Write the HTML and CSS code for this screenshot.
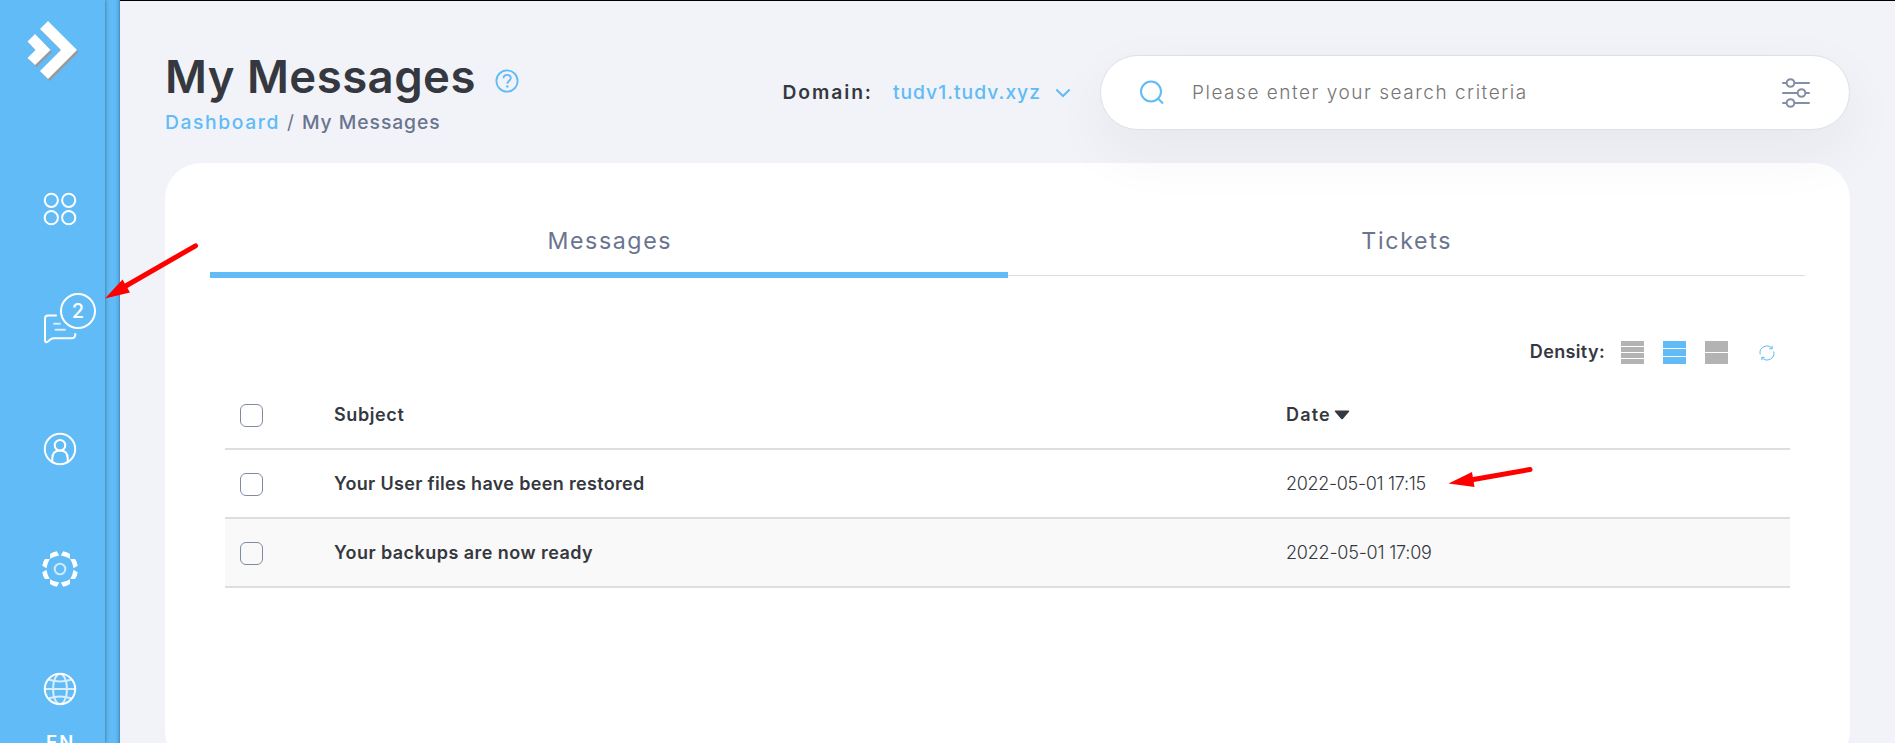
FILE: index.html
```html
<!DOCTYPE html>
<html lang="en">
<head>
<meta charset="utf-8">
<title>My Messages</title>
<link rel="stylesheet" href="styles.css">
</head>
<body>
<div class="app">
  <aside class="sidebar">
    <nav class="sidebar-inner">
      <svg class="logo" width="54" height="62" viewBox="0 0 54 62">
        <g fill="#999" transform="translate(1.500 2)"><path d="M21 0L50 29 21 58 13 50 34 29 13 8Z"/><path d="M8 13L23.500 29 8 44 0.500 37 8.500 29 0.500 20.500Z"/></g>
        <g fill="#fff"><path d="M21 0L50 29 21 58 13 50 34 29 13 8Z"/><path d="M8 13L23.500 29 8 44 0.500 37 8.500 29 0.500 20.500Z"/></g>
      </svg>
      <a class="nav-item">
        <svg width="36" height="36" viewBox="0 0 36 36" fill="none" stroke="#fff" stroke-width="2"><circle cx="9.300" cy="9.300" r="6.600"/><circle cx="26.700" cy="9.300" r="6.600"/><circle cx="9.300" cy="26.700" r="6.600"/><circle cx="26.700" cy="26.700" r="6.600"/></svg>
      </a>
      <a class="nav-item">
        <svg width="36" height="36" viewBox="0 0 36 36" fill="none" stroke="#fff" stroke-width="2" stroke-linecap="round"><path d="M14 4.500H6Q3 4.500 3 7.500V29C3 31.500 4.500 32 6 30.500L9 28Q10 27.200 12 27.200H30Q33.300 27.200 33.300 23"/><path d="M12 12.800H18M13.500 18.800H23" opacity=".75"/></svg>
        <span class="badge">2</span>
      </a>
      <a class="nav-item">
        <svg width="36" height="36" viewBox="0 0 36 36" fill="none" stroke="#fff" stroke-width="2"><circle cx="18" cy="18" r="15.200"/><circle cx="18" cy="14.200" r="5.300"/><path d="M10.300 31V27.500C10.300 22 13.500 19.500 18 19.500S25.700 22 25.700 27.500V31"/></svg>
      </a>
      <a class="nav-item">
        <svg width="36" height="36" viewBox="0 0 36 36" fill="#fff">
          <defs><g id="petals"><path d="M.8-13.500L3.200-17.700Q7-17.300 10-15V-10.200Q6-12.800 .8-13.500Z"/><path d="M-.8-13.500L-3.200-17.700Q-7-17.300-10-15V-10.200Q-6-12.800-.8-13.500Z"/></g></defs>
          <circle cx="18" cy="18" r="5.300" fill="none" stroke="#fff" stroke-width="2" opacity=".7"/>
          <use href="#petals" transform="translate(18 18)"/><use href="#petals" transform="translate(18 18) rotate(90)"/><use href="#petals" transform="translate(18 18) rotate(180)"/><use href="#petals" transform="translate(18 18) rotate(270)"/>
        </svg>
      </a>
      <a class="nav-item">
        <svg width="36" height="36" viewBox="0 0 36 36" fill="none" stroke="#fff" stroke-width="2"><circle cx="18" cy="18" r="15.200"/><g opacity=".75"><ellipse cx="18" cy="18" rx="7" ry="15"/><path d="M3 18H33M6.500 8.500Q18 12.500 29.500 8.500M6.500 27.500Q18 23.500 29.500 27.500"/></g></svg>
        <span class="lang">EN</span>
      </a>
    </nav>
  </aside>

  <main class="main">
    <header class="header">
      <div class="heading">
        <div class="title-row">
          <h1 class="title">My Messages</h1>
          <svg class="help" width="24" height="24" viewBox="0 0 24 24" fill="none" stroke="#60bbf6" stroke-width="1.800"><circle cx="12" cy="12" r="10.600"/><path d="M8.500 9.300C8.500 4.700 15.800 4.900 15.800 9.100 15.800 11.700 12.300 11.800 12.300 14.800"/><path d="M12.300 16.500V18.500" stroke-width="2.400"/></svg>
        </div>
        <div class="crumbs"><a class="crumb-link">Dashboard</a><span class="slash">/</span><span class="crumb-current">My Messages</span></div>
      </div>
      <div class="tools">
        <span class="domain-label">Domain:</span>
        <span class="domain-value">tudv1.tudv.xyz</span>
        <svg class="chevron" width="16" height="10" viewBox="0 0 16 10" fill="none" stroke="#60bbf6" stroke-width="2"><path d="M1.300 1.500L8 8 14.700 1.500"/></svg>
        <div class="search">
          <svg class="search-icon" width="26" height="26" viewBox="0 0 26 26" fill="none" stroke="#60bbf6" stroke-width="2"><circle cx="12" cy="11.500" r="10"/><path d="M18.800 18.300L24 23.500"/></svg>
          <span class="placeholder">Please enter your search criteria</span>
          <svg width="28" height="30" viewBox="0 0 28 30" fill="#fff" stroke="#858ea8" stroke-width="2" stroke-linecap="round"><path d="M1 5H27M1 15H27M1 25H27"/><circle cx="8.500" cy="5" r="3.800"/><circle cx="19.500" cy="15" r="3.800"/><circle cx="8.500" cy="25" r="3.800"/></svg>
        </div>
      </div>
    </header>

    <section class="card">
      <div class="tabs">
        <a class="tab active"><span class="tab-messages">Messages</span></a>
        <a class="tab"><span class="tab-tickets">Tickets</span></a>
      </div>
      <div class="content">
        <div class="toolbar">
          <span class="density-label">Density:</span>
          <span class="density"><i></i><i></i><i></i><i></i></span>
          <span class="density selected"><i></i><i></i><i></i></span>
          <span class="density"><i></i><i></i></span>
          <svg class="refresh" width="16" height="16" viewBox="0 0 16 16" fill="none" stroke="#60bbf6" stroke-width="1"><path d="M1.200 9.500A6.800 6.800 0 0 1 13 3.500M13.200 0.800V3.700H10.300M14.800 6.500A6.800 6.800 0 0 1 3 12.500M2.800 15.200V12.300H5.700"/></svg>
        </div>
        <div class="row head">
          <span class="check"></span><span class="subject col-title">Subject</span>
          <span class="date-head">Date</span><svg class="sort" width="16" height="10" viewBox="0 0 16 10" fill="#35383f"><path d="M1.500 0.500H14.500Q16 0.700 15 1.800L9 8.700Q8 9.700 7 8.700L1 1.800Q0 0.700 1.500 0.500Z"/></svg>
        </div>
        <div class="row">
          <span class="check"></span><span class="subject">Your User files have been restored</span><span class="date">2022-05-01 17:15</span>
        </div>
        <div class="row striped">
          <span class="check"></span><span class="subject wide">Your backups are now ready</span><span class="date">2022-05-01 17:09</span>
        </div>
      </div>
    </section>
  </main>
</div>
<svg class="annotations" width="1895" height="743" viewBox="0 0 1895 743" fill="#f00">
  <path d="M195.500 245.800L124 287" stroke="#f00" stroke-width="5" stroke-linecap="round"/>
  <path d="M105 298.500L122.500 279.500 130 292.500Z"/>
  <path d="M1530 469.500L1472 479.700" stroke="#f00" stroke-width="5" stroke-linecap="round"/>
  <path d="M1448.500 483.500L1472 472 1474.500 487Z"/>
</svg>
</body>
</html>
```

FILE: styles.css
```css
* { box-sizing: border-box; }
body {
  margin: 0;
  font-family: Inter, "Liberation Sans", sans-serif;
  color: #35383f;
}
svg { display: block; flex: none; }
.app { display: flex; width: 1895px; height: 743px; overflow: hidden; }

.sidebar {
  flex: none;
  width: 120px;
  background: linear-gradient(to left, rgba(0, 30, 70, .3), rgba(0, 30, 70, .08) 2px, transparent 5px) #60bbf6;
}
.sidebar-inner {
  width: 105px;
  height: 743px;
  padding-top: 21px;
  background: #60bbf6;
  box-shadow: 0 0 4px rgba(0, 0, 0, .45);
}
.logo { margin-left: 27px; }
.nav-item {
  display: block;
  position: relative;
  height: 36px;
  margin: 0 0 84px 42px;
}
.logo + .nav-item { margin-top: 108px; }
.badge {
  position: absolute;
  left: 18px;
  top: -18px;
  width: 36px;
  height: 36px;
  border: 2.5px solid #fff;
  border-radius: 50%;
  background: #60bbf6;
  box-shadow: 0 0 0 3px #60bbf6;
  color: #fff;
  font-size: 20px;
  font-weight: 500;
  line-height: 32px;
  text-align: center;
}
.lang {
  display: block;
  margin: 23px 0 0 4px;
  font-size: 18.500px;
  line-height: 24px;
  font-weight: 600;
  letter-spacing: 2px;
  color: #fff;
}

.main {
  width: 1775px;
  height: 790px;
  padding: 0 45px;
  background: #f1f3f8;
  border-top: 1px solid #000;
}
.header { display: flex; justify-content: space-between; height: 162px; padding-top: 48px; }
.title-row { display: flex; align-items: center; }
.title { margin: 0; font-size: 45.500px; line-height: 56px; font-weight: 600; letter-spacing: .45px; }
.help { margin: 7px 0 0 19px; }
.crumbs { display: flex; margin: 3px 0 0; font-size: 19.300px; line-height: 28px; font-weight: 500; color: #6b748e; }
.crumb-link { color: #60bbf6; letter-spacing: 1.600px; }
.slash { margin: 0 8px 0 7px; font-weight: 400; }
.crumb-current { letter-spacing: .95px; }
.tools { display: flex; align-items: center; height: 75px; margin-top: 6px; font-size: 19.300px; line-height: 28px; }
.domain-label { font-weight: 600; letter-spacing: 1.900px; margin: -1px 20px 0 0; }
.domain-value { font-weight: 500; letter-spacing: 1px; color: #60bbf6; margin: -1px 14px 0 0; }
.chevron { margin-right: 29px; }
.search {
  display: flex;
  align-items: center;
  width: 750px;
  height: 75px;
  padding: 0 39px 0 38px;
  background: #fff;
  border: 1px solid #dbe0ea;
  border-radius: 38px;
  box-shadow: 0 22px 60px rgba(28, 45, 70, .055);
  position: relative;
  z-index: 1;
}
.search-icon { margin-right: 27px; }
.placeholder { flex: 1; margin-top: 1px; font-size: 19px; font-weight: 300; letter-spacing: 1.520px; color: #757575; }

.card { height: 604px; padding: 63px 45px 0; background: #fff; border-radius: 36px; }
.tabs { display: flex; align-items: flex-start; }
.tab {
  flex: 1;
  height: 50px;
  border-bottom: 1px solid #dedede;
  font-size: 23.200px;
  line-height: 31px;
  font-weight: 400;
  text-align: center;
  color: #6b748e;
}
.tab.active { height: 52px; border-bottom: 6px solid #60bbf6; }
.tab-messages { letter-spacing: 1.600px; margin-left: 2px; }
.tab-tickets { letter-spacing: 1.700px; margin-left: 1px; }

.content { padding: 61px 15px 0; }
.toolbar { display: flex; align-items: center; height: 27px; padding-right: 15px; margin-bottom: 15px; }
.density-label { margin: -3px 16px 0 auto; font-size: 18px; font-weight: 600; letter-spacing: .35px; }
.density { display: flex; flex-direction: column; gap: 1px; width: 23px; height: 23px; margin-right: 19px; }
.density i { flex: 1; background: #b3b3b3; }
.density.selected i { background: #60bbf6; }
.refresh { margin-left: 12px; }

.row {
  display: flex;
  align-items: center;
  height: 69px;
  padding-left: 15px;
  border-bottom: 2px solid #dedede;
  font-size: 18px;
}
.head { font-weight: 600; }
.striped { background: #f9f9f9; }
.check { flex: none; width: 23px; height: 23px; margin-top: 1px; border: 1px solid #808aa3; border-radius: 6px; }
.subject { width: 952px; margin-left: 71px; font-weight: 600; letter-spacing: .33px; }
.subject.wide { letter-spacing: .45px; }
.subject.col-title { letter-spacing: .6px; }
.date-head { width: 48px; letter-spacing: 1.200px; }
.date { font-weight: 300; letter-spacing: -.32px; }
.striped .date { letter-spacing: -.22px; }

.annotations { position: absolute; left: 0; top: 0; z-index: 5; }
```
